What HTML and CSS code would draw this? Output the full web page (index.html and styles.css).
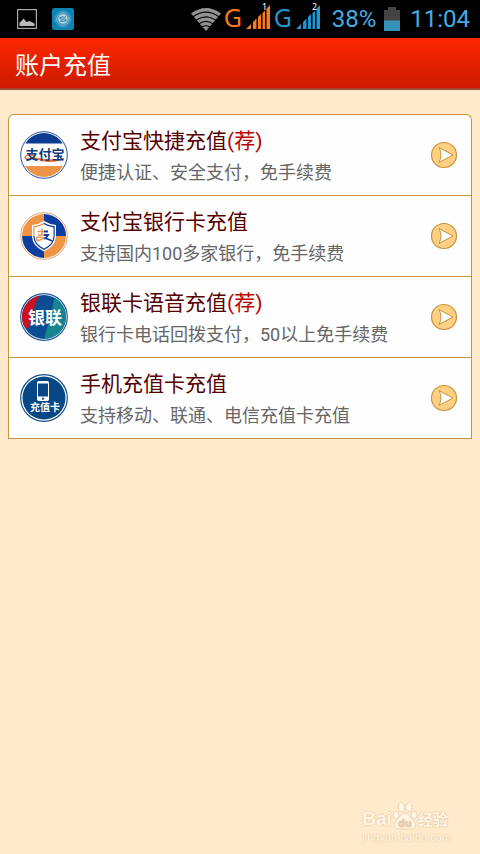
FILE: index.html
```html
<!DOCTYPE html>
<html lang="zh-CN">
<head>
<meta charset="utf-8">
<meta name="viewport" content="width=device-width, initial-scale=1">
<title>账户充值</title>
<link rel="stylesheet" href="styles.css">
</head>
<body>
<svg class="defs" width="0" height="0" aria-hidden="true">
  <defs>
    <clipPath id="disc"><circle cx="24" cy="24" r="22"/></clipPath>
    <symbol id="go" viewBox="0 0 28 28">
      <circle cx="14" cy="14" r="12.500" fill="#ffd083" stroke="#c79338" stroke-width="1.200"/>
      <path d="M9 6.500 L23 14 L9 21.500 Q13 14 9 6.500 Z" fill="#fff" stroke="#c79338" stroke-width="1" stroke-linejoin="round"/>
    </symbol>
  </defs>
</svg>
<div class="status">
  <div class="status-group notices">
    <svg width="20" height="20" viewBox="0 0 20 20">
      <rect x="0.600" y="0.600" width="18.800" height="18.800" fill="none" stroke="#aaa" stroke-width="1.200"/>
      <path d="M2.500 17 V13.500 L4.500 12 L6.500 9.500 L9.500 13 L12.500 12 L17.500 14.500 V17 Z" fill="#bbb"/>
    </svg>
    <svg width="22" height="22" viewBox="0 0 22 22">
      <rect width="22" height="22" rx="2.500" fill="#0d83b3"/>
      <circle cx="11" cy="11" r="8" fill="none" stroke="#3d9fc4"/>
      <circle cx="11" cy="11" r="6.300" fill="#2b95be" stroke="#8fbccd"/>
      <circle cx="11" cy="11" r="4.800" fill="#c0d2da"/>
      <path d="M14 9 H9.500 Q8 9 8 10 Q8 11 9.500 11 H12.500 Q14 11 14 12 Q14 13.200 12.500 13.200 H8" fill="none" stroke="#2784a9" stroke-width="1.200"/>
    </svg>
  </div>
  <div class="status-group">
    <svg width="30" height="23" viewBox="0 0 30 23">
      <path d="M0 5.500 Q15 -5.500 30 5.500 L15 23 Z" fill="#929292"/>
      <path d="M2 8.700 Q15 -0.500 28 8.700 M5 12.300 Q15 5.500 25 12.300 M8 15.800 Q15 11 22 15.800 M11 19 Q15 16.500 19 19" fill="none" stroke="#000" stroke-width="1.100"/>
    </svg>
    <span class="network orange">G</span>
    <svg class="signal" width="25" height="26" viewBox="0 0 25 26">
      <path d="M0 25 L5 20 V25 Z M7 18 L10.500 14.500 V25 H7 Z M12 13 L15 10 V25 H12 Z M16.500 9 L19 6.500 V25 H16.500 Z M20.500 4.500 L24 1 V25 H20.500 Z" fill="#f57b20"/>
      <text x="16" y="6" class="sim">1</text>
    </svg>
    <span class="network blue">G</span>
    <svg class="signal" width="25" height="26" viewBox="0 0 25 26">
      <path d="M0 25 L5 20 V25 Z M7 18 L10.500 14.500 V25 H7 Z M12 13 L15 10 V25 H12 Z M16.500 9 L19 6.500 V25 H16.500 Z M20.500 4.500 L24 1 V25 H20.500 Z" fill="#2394cf"/>
      <text x="16" y="6" class="sim">2</text>
    </svg>
    <span class="reading charge">38%</span>
    <svg width="16" height="24" viewBox="0 0 16 24">
      <path d="M0 3 H4 V0 H12 V3 H16 V14 H0 Z" fill="#444"/>
      <rect y="13.500" width="16" height="10.500" fill="#3792b8"/>
    </svg>
    <span class="reading clock">11:04</span>
  </div>
</div>
<header class="bar"><h1>账户充值</h1></header>
<main>
  <ul class="options">
    <li><a href="#alipay">
      <svg class="logo" viewBox="0 0 48 48">
        <circle cx="24" cy="24" r="23.300" fill="#fff" stroke="#24539a" stroke-width="1"/>
        <g clip-path="url(#disc)">
          <rect width="48" height="12.500" fill="#0b3c92"/>
          <rect y="35" width="48" height="13" fill="#ec9448"/>
        </g>
        <path d="M15 25 Q7 22.500 5 26 Q5 30 15 26 M14 27 Q29 31 44 27.500" fill="none" stroke="#f16b2a" stroke-width="1.200"/>
        <path d="M14 26.500 Q30 31 45 27 Q39 31 30 31 Q21 31 14 26.500 Z" fill="#f16b2a"/>
        <text x="25" y="28" class="logo-text alipay">支付宝</text>
      </svg>
      <span class="copy"><span class="name">支付宝快捷充值<em>(荐)</em></span><span class="note">便捷认证、安全支付，免手续费</span></span>
      <svg class="go"><use href="#go"/></svg>
    </a></li>
    <li><a href="#bank">
      <svg class="logo" viewBox="0 0 48 48">
        <circle cx="24" cy="24" r="23.300" fill="#fff" stroke="#e4a26c" stroke-width="1"/>
        <g clip-path="url(#disc)">
          <path d="M0 0 H24 V24 H0 Z M24 24 H48 V48 H24 Z" fill="#ef9345"/>
          <path d="M24 0 H48 V24 H24 Z M0 24 H24 V48 H0 Z" fill="#0b3ea0"/>
        </g>
        <path d="M24 9 Q30 12.500 36 13 V24 Q36 34 24 39.500 Q12 34 12 24 V13 Q18 12.500 24 9 Z" fill="#fff"/>
        <path d="M24 10.800 Q29.500 14 34.700 14.300 V24 Q34.700 33 24 38 Z" fill="#0b3ea0"/>
        <path d="M24 10.800 Q18.500 14 13.300 14.300 V24 H24 Z" fill="#ef9345"/>
        <path d="M13.300 24 Q13.300 33 24 38 V24 Z" fill="#0b3ea0"/>
        <path d="M24 12.300 Q29 15 33.500 15.400 V24 Q33.500 32 24 36.500 Q14.500 32 14.500 24 V15.400 Q19 15 24 12.300 Z" fill="#fff"/>
        <path d="M17.500 19.500 H24 M22 16.500 V23 M18 23 H24 M24 25 Q21 28.500 18 28.500 Q15.500 28 16.500 25.800 Q18.500 24 23 26" fill="none" stroke="#ef9345" stroke-width="1.500"/>
        <path d="M24 19.500 H28 M24 23 H28 Q26.500 26 24 27 M25 26 L32.500 29" fill="none" stroke="#0b3ea0" stroke-width="1.800"/>
      </svg>
      <span class="copy"><span class="name">支付宝银行卡充值</span><span class="note">支持国内100多家银行，免手续费</span></span>
      <svg class="go"><use href="#go"/></svg>
    </a></li>
    <li><a href="#unionpay">
      <svg class="logo" viewBox="0 0 48 48">
        <circle cx="24" cy="24" r="23.300" fill="#fff" stroke="#235a98" stroke-width="1.200"/>
        <g clip-path="url(#disc)">
          <rect width="48" height="48" fill="#0b4d92"/>
          <path d="M0 0 H21 Q14 10 13 22 L8 36 L0 30 Z" fill="#cb1020"/>
          <path d="M36 0 H48 V48 H24 Q26 36 30 28 Q32 12 36 0 Z" fill="#168491"/>
        </g>
        <text x="25" y="31" class="logo-text union">银联</text>
      </svg>
      <span class="copy"><span class="name">银联卡语音充值<em>(荐)</em></span><span class="note">银行卡电话回拨支付，50以上免手续费</span></span>
      <svg class="go"><use href="#go"/></svg>
    </a></li>
    <li><a href="#card">
      <svg class="logo" viewBox="0 0 48 48">
        <circle cx="24" cy="24" r="23.300" fill="#fff" stroke="#164f8f" stroke-width="1.200"/>
        <circle cx="24" cy="24" r="21.500" fill="#064785"/>
        <rect x="17" y="7" width="12" height="20" rx="1.800" fill="#fff"/>
        <rect x="18" y="9.500" width="10" height="13" fill="#064785"/>
        <circle cx="23" cy="24.700" r="1.100" fill="#064785"/>
        <text x="25" y="37" class="logo-text topup">充值卡</text>
      </svg>
      <span class="copy"><span class="name">手机充值卡充值</span><span class="note">支持移动、联通、电信充值卡充值</span></span>
      <svg class="go"><use href="#go"/></svg>
    </a></li>
  </ul>
</main>
<div class="watermark">
  <div class="brand">
    <span>Bai</span>
    <svg width="26" height="28" viewBox="0 0 26 28">
      <g fill="#fff6e6" stroke="#ecd6b5">
        <ellipse cx="4" cy="13" rx="3" ry="4"/>
        <ellipse cx="9.500" cy="5" rx="3" ry="4.500"/>
        <ellipse cx="17" cy="5" rx="3" ry="4.500"/>
        <ellipse cx="22" cy="13" rx="3" ry="4"/>
        <path d="M13 11 C17 11 17.500 15 22 19 C25 23 23 27 19 27 H7 C3 27 1 23 4 19 C8.500 15 9 11 13 11 Z"/>
      </g>
      <text x="13" y="25" class="du">du</text>
    </svg>
    <span class="guide">经验</span>
  </div>
  <div class="site">jingyan.baidu.com</div>
</div>
</body>
</html>
```

FILE: styles.css
```css
* { box-sizing: border-box; }

body {
  margin: 0;
  min-height: 100vh;
  display: flex;
  flex-direction: column;
  background: #ffeacb;
  font-family: Roboto, "Noto Sans CJK SC", sans-serif;
}

svg { display: block; flex: none; }
.defs { position: absolute; }

.status {
  display: flex;
  justify-content: space-between;
  align-items: center;
  height: 38px;
  padding: 0 10px 0 17px;
  background: #000;
}

.status-group { display: flex; align-items: center; }
.notices { gap: 15px; }

.network {
  margin-left: 3px;
  width: 20px;
  font: 25px/34px "Noto Sans", sans-serif;
  padding-bottom: 4px;
}
.orange { color: #f57b20; }
.blue { color: #2394cf; }
.signal { overflow: visible; margin: 0 0 4px 2px; }
.sim { font: 9px "Noto Sans", sans-serif; fill: #fff; }
.reading { color: #42ade0; font-size: 24px; line-height: 38px; }
.charge { margin: 0 8px 0 11px; }
.clock { margin-left: 10px; }

.bar {
  height: 52px;
  padding: 0 15px;
  border-bottom: 2px solid #a44a37;
  background: linear-gradient(#fc2700, #cc1a00);
}
.bar h1 {
  margin: 0;
  color: #fff;
  font-size: 24px;
  font-weight: 400;
  line-height: 56px;
}

main { flex: 1; padding: 24px 8px; }

.options {
  margin: 0;
  padding: 0;
  list-style: none;
  overflow: hidden;
  border: 1px solid #c6963f;
  border-bottom: 0;
  border-radius: 6px 6px 0 0;
  background: #fefefe;
}
.options li { border-bottom: 1px solid #c6963f; }
.options a {
  display: flex;
  align-items: center;
  gap: 12px;
  min-height: 80px;
  padding: 4px 13px 4px 11px;
  color: #666;
  text-decoration: none;
}

.logo { width: 48px; height: 48px; }
.go { width: 28px; height: 28px; }
.copy { flex: 1; min-width: 0; padding-top: 4px; }
.name, .note { display: block; line-height: 32px; }
.name { color: #570000; font-size: 21px; }
.name em { color: #bb0000; font-style: normal; }
.note { font-size: 18px; }

.logo-text {
  font-family: "Noto Sans CJK SC", sans-serif;
  font-weight: 700;
  text-anchor: middle;
  fill: #fff;
}
.alipay { font-size: 13px; fill: #123b80; }
.union { font-size: 17px; }
.topup { font-size: 10px; }

.watermark {
  align-self: flex-end;
  padding: 0 29px 10px 0;
  color: #fff6e6;
  text-shadow: 0 0 2px #d2b48a;
}
.brand { display: flex; align-items: flex-end; font: 700 19px/22px "Liberation Sans", sans-serif; }
.guide { font: 700 15px/22px "Noto Sans CJK SC", sans-serif; }
.du { font: 700 11px "Liberation Sans", sans-serif; text-anchor: middle; fill: #e5cda8; }
.site { font: 11px/14px "Liberation Sans", sans-serif; }
```
